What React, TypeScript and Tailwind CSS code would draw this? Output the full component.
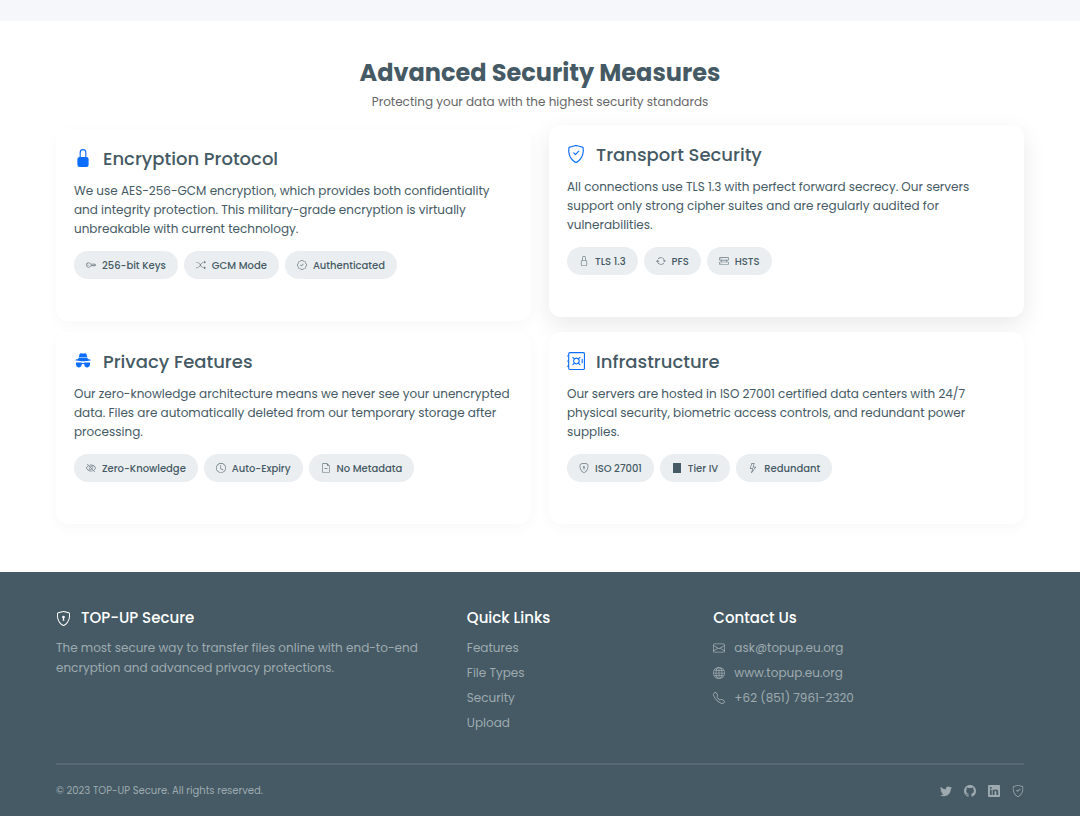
import type { ComponentType } from 'react';
import {
  BsLockFill, BsLock, BsShieldCheck, BsSafe, BsKey, BsShuffle, BsPatchCheck,
  BsArrowRepeat, BsHddRack, BsEyeSlash, BsClock, BsFileEarmarkMinus, BsShieldLock,
  BsLightning, BsEnvelope, BsGlobe, BsTelephone, BsTwitter, BsGithub, BsLinkedin,
} from 'react-icons/bs';

type Icon = ComponentType<{ className?: string }>;
type Tag = { icon: Icon; label: string };
type Card = { icon: Icon; title: string; lines: string[]; tags: Tag[]; raised?: boolean };

function Incognito({ className }: { className?: string }) {
  return (
    <svg viewBox="0 0 18 18" fill="currentColor" className={className} aria-hidden="true">
      <path d="M5.600 1.900C5.900 1.200 6.600 1 7.300 1.200c1.100.4 2.300.4 3.400 0 .7-.2 1.400 0 1.700.7l.9 3.400H4.700z" />
      <path d="M4.400 5.800h9.200l.2 1.200c1.700.2 2.900.6 2.900 1.100 0 .7-3.400 1.200-7.700 1.200S1.300 8.800 1.300 8.100c0-.5 1.200-.9 2.900-1.100z" />
      <path d="M2 10.400h5.400c.4 0 .6.200.8.500h1.600c.2-.3.400-.5.800-.5H16v2.400a2.800 2.800 0 0 1-5.500.6l-.4-1.300H7.900l-.4 1.300A2.800 2.800 0 0 1 2 12.800z" />
    </svg>
  );
}

function Block({ className }: { className?: string }) {
  return (
    <svg viewBox="0 0 10 10" fill="currentColor" className={className} aria-hidden="true">
      <rect x="1" width="8" height="10" rx="0.3" />
    </svg>
  );
}

const cards: Card[] = [
  {
    icon: BsLockFill,
    title: 'Encryption Protocol',
    lines: [
      'We use AES-256-GCM encryption, which provides both confidentiality',
      'and integrity protection. This military-grade encryption is virtually',
      'unbreakable with current technology.',
    ],
    tags: [
      { icon: BsKey, label: '256-bit Keys' },
      { icon: BsShuffle, label: 'GCM Mode' },
      { icon: BsPatchCheck, label: 'Authenticated' },
    ],
  },
  {
    icon: BsShieldCheck,
    title: 'Transport Security',
    raised: true,
    lines: [
      'All connections use TLS 1.3 with perfect forward secrecy. Our servers',
      'support only strong cipher suites and are regularly audited for',
      'vulnerabilities.',
    ],
    tags: [
      { icon: BsLock, label: 'TLS 1.3' },
      { icon: BsArrowRepeat, label: 'PFS' },
      { icon: BsHddRack, label: 'HSTS' },
    ],
  },
  {
    icon: Incognito,
    title: 'Privacy Features',
    lines: [
      'Our zero-knowledge architecture means we never see your unencrypted',
      'data. Files are automatically deleted from our temporary storage after',
      'processing.',
    ],
    tags: [
      { icon: BsEyeSlash, label: 'Zero-Knowledge' },
      { icon: BsClock, label: 'Auto-Expiry' },
      { icon: BsFileEarmarkMinus, label: 'No Metadata' },
    ],
  },
  {
    icon: BsSafe,
    title: 'Infrastructure',
    lines: [
      'Our servers are hosted in ISO 27001 certified data centers with 24/7',
      'physical security, biometric access controls, and redundant power',
      'supplies.',
    ],
    tags: [
      { icon: BsShieldLock, label: 'ISO 27001' },
      { icon: Block, label: 'Tier IV' },
      { icon: BsLightning, label: 'Redundant' },
    ],
  },
];

const links = ['Features', 'File Types', 'Security', 'Upload'];

const contacts = [
  { icon: BsEnvelope, label: 'ask@topup.eu.org', href: 'mailto:ask@topup.eu.org' },
  { icon: BsGlobe, label: 'www.topup.eu.org', href: '#web' },
  { icon: BsTelephone, label: '+62 (851) 7961-2320', href: 'tel:+6285179612320' },
];

const socials = [
  { icon: BsTwitter, label: 'Twitter' },
  { icon: BsGithub, label: 'GitHub' },
  { icon: BsLinkedin, label: 'LinkedIn' },
  { icon: BsShieldCheck, label: 'Security' },
];

function SecurityCard({ icon: Icon, title, lines, tags, raised }: Card) {
  return (
    <article
      className={
        raised
          ? 'mb-1 -mt-1 min-h-48 rounded-xl bg-white px-[18px] pt-4 pb-10 shadow-[0_8px_24px_rgba(0,0,0,0.09)]'
          : 'min-h-48 rounded-xl bg-white px-[18px] pt-4 pb-10 shadow-[0_4px_14px_rgba(0,0,0,0.03)]'
      }
    >
      <h3 className="flex items-center gap-[11px] text-[18px] leading-7 font-medium">
        <Icon className="mb-0.5 size-[18px] shrink-0 text-[#0d6efd]" />
        {title}
      </h3>
      <p className="mt-2 text-[12px] leading-[19px]">
        {lines.map((line) => (
          <span key={line} className="block">{line}</span>
        ))}
      </p>
      <ul className="mt-[13px] flex flex-wrap gap-[6px]">
        {tags.map(({ icon: TagIcon, label }) => (
          <li key={label} className="flex h-7 items-center gap-[6px] rounded-full bg-[#ebeef1] px-3 text-[10px] font-medium">
            <TagIcon className={TagIcon === Block ? 'size-[10px]' : 'size-[10px] opacity-80'} />
            {label}
          </li>
        ))}
      </ul>
    </article>
  );
}

export default function App() {
  return (
    <div className="min-h-screen bg-white font-['Poppins','Inter',sans-serif] text-[#455a64]">
      <div className="h-[21px] bg-[#f5f7fb]" />
      <main className="px-14 pt-[37px] pb-12">
        <h2 className="text-center text-[24px] leading-[30px] font-bold">Advanced Security Measures</h2>
        <p className="mt-1 text-center text-[12px] leading-5 text-[#666666]">
          Protecting your data with the highest security standards
        </p>
        <div className="mt-[17px] grid grid-cols-2 gap-x-[18px] gap-y-[11px]">
          {cards.map((card) => (
            <SecurityCard key={card.title} {...card} />
          ))}
        </div>
      </main>
      <footer className="bg-[#455a64] px-14 pt-[34px] pb-[15px]">
        <div className="grid grid-cols-12 gap-x-[18px]">
          <section className="col-span-5">
            <h4 className="flex items-center gap-[10px] text-[15px] leading-6 font-medium text-white">
              <BsShieldLock className="size-[15px]" />
              TOP-UP Secure
            </h4>
            <p className="mt-2 text-[12px] leading-5 text-[#9faab0]">
              <span className="block">The most secure way to transfer files online with end-to-end</span>
              <span className="block">encryption and advanced privacy protections.</span>
            </p>
          </section>
          <section className="col-span-3">
            <h4 className="text-[15px] leading-6 font-medium text-white">Quick Links</h4>
            <ul className="mt-2 flex flex-col gap-[5px] text-[12px] leading-5 text-[#9faab0]">
              {links.map((link) => (
                <li key={link}><a href={'#' + link}>{link}</a></li>
              ))}
            </ul>
          </section>
          <section className="col-span-4">
            <h4 className="text-[15px] leading-6 font-medium text-white">Contact Us</h4>
            <ul className="mt-2 flex flex-col gap-[5px] text-[12px] leading-5 text-[#9faab0]">
              {contacts.map(({ icon: Icon, label, href }) => (
                <li key={label}>
                  <a href={href} className="flex items-center gap-[9px]">
                    <Icon className="size-3" />
                    {label}
                  </a>
                </li>
              ))}
            </ul>
          </section>
        </div>
        <div className="mt-[30px] flex items-center justify-between border-t-2 border-[#576a73] pt-4 text-[#9faab0]">
          <p className="text-[10px] leading-5">© 2023 TOP-UP Secure. All rights reserved.</p>
          <nav className="flex gap-3">
            {socials.map(({ icon: Icon, label }) => (
              <a key={label} href={'#' + label} aria-label={label}>
                <Icon className="size-3" />
              </a>
            ))}
          </nav>
        </div>
      </footer>
    </div>
  );
}
